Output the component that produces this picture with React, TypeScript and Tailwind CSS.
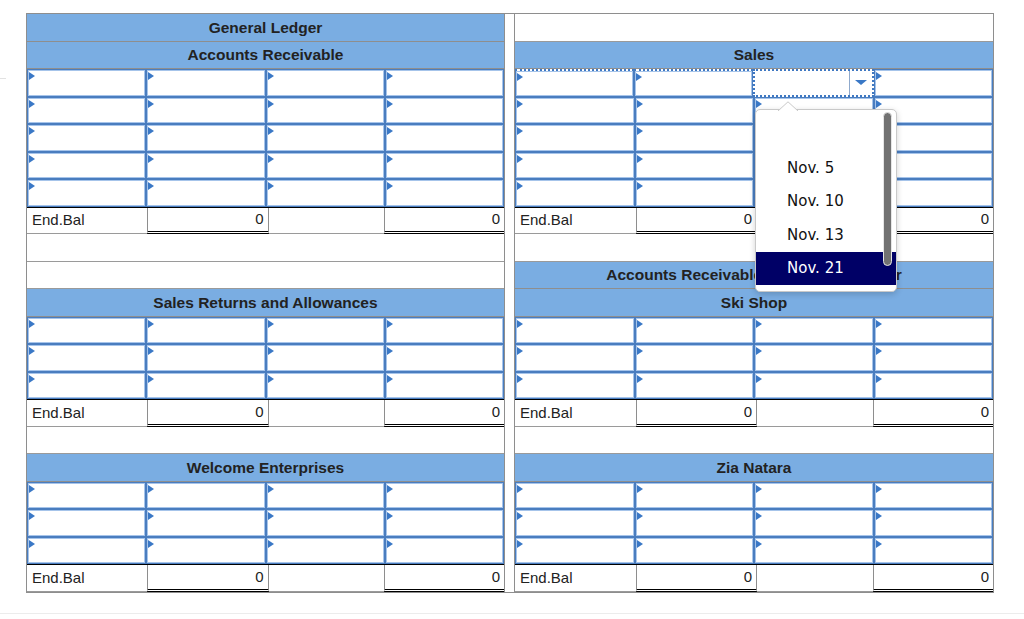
import React from 'react';

type Row =
    | { kind: 'header'; text: string }
    | { kind: 'blank' }
    | { kind: 'input' }
    | { kind: 'select' }
    | { kind: 'end' };

const header = (text: string): Row => ({ kind: 'header', text });
const inputs = (n: number): Row[] => Array.from({ length: n }, () => ({ kind: 'input' }) as Row);

const leftRows: Row[] = [
    header('General Ledger'),
    header('Accounts Receivable'),
    ...inputs(5),
    { kind: 'end' },
    { kind: 'blank' },
    { kind: 'blank' },
    header('Sales Returns and Allowances'),
    ...inputs(3),
    { kind: 'end' },
    { kind: 'blank' },
    header('Welcome Enterprises'),
    ...inputs(3),
    { kind: 'end' },
];

const rightRows: Row[] = [
    { kind: 'blank' },
    header('Sales'),
    { kind: 'select' },
    ...inputs(4),
    { kind: 'end' },
    { kind: 'blank' },
    header('Accounts Receivable Subsidiary Ledger'),
    header('Ski Shop'),
    ...inputs(3),
    { kind: 'end' },
    { kind: 'blank' },
    header('Zia Natara'),
    ...inputs(3),
    { kind: 'end' },
];

const Flag = () => (
    <span className="absolute left-[1px] top-[2px] h-0 w-0 border-y-[4px] border-y-transparent border-l-[6px] border-l-[#3a78c6]" />
);

const InputCell = ({ dottedTop = false }: { dottedTop?: boolean }) => (
    <div
        className={
            dottedTop
                ? 'relative h-full flex-1 border border-[#4a7dbf] border-t-2 border-t-[#3f78c2] [border-top-style:dotted] bg-white shadow-[inset_0_0_0_1px_#a6c4ea]'
                : 'relative h-full flex-1 border border-[#4a7dbf] bg-white shadow-[inset_0_0_0_1px_#a6c4ea]'
        }
    >
        <Flag />
    </div>
);

const SelectCell = () => (
    <div className="relative flex h-full flex-1 border-2 border-dotted border-[#3f78c2] bg-white">
        <div className="flex-1" />
        <div className="flex w-[23px] items-center justify-center border-l border-[#8fa9cc]">
            <span className="h-0 w-0 border-x-[6px] border-x-transparent border-t-[5px] border-t-[#3a78c6]" />
        </div>
    </div>
);

const LedgerRow = ({ row }: { row: Row }) => {
    if (row.kind === 'header') {
        return (
            <div className="flex h-[27.5px] items-center justify-center border-b border-[#8e8e8e] bg-[#7aade2] text-[15.5px] font-bold text-[#222]">
                {row.text}
            </div>
        );
    }
    if (row.kind === 'blank') {
        return <div className="h-[27.5px] border-b border-[#9a9a9a] bg-white" />;
    }
    if (row.kind === 'input') {
        return (
            <div className="flex h-[27.5px]">
                <InputCell />
                <InputCell />
                <InputCell />
                <InputCell />
            </div>
        );
    }
    if (row.kind === 'select') {
        return (
            <div className="flex h-[27.5px]">
                <InputCell dottedTop />
                <InputCell dottedTop />
                <SelectCell />
                <InputCell />
            </div>
        );
    }
    return (
        <div className="flex h-[27.5px] border-t border-black text-[15px] text-[#222]">
            <div className="flex flex-1 items-center border-b border-[#9a9a9a] pl-[5px]">End.Bal</div>
            <div className="flex flex-1 items-center justify-end border-x border-b-[3px] border-double border-x-[#8e8e8e] border-b-black pr-[4px]">
                0
            </div>
            <div className="flex-1 border-b border-[#9a9a9a]" />
            <div className="flex flex-1 items-center justify-end border-l border-b-[3px] border-double border-l-[#8e8e8e] border-b-black pr-[4px]">
                0
            </div>
        </div>
    );
};

const Panel = ({ rows, className }: { rows: Row[]; className: string }) => (
    <div className={className}>
        {rows.map((row, i) => (
            <LedgerRow key={i} row={row} />
        ))}
    </div>
);

const options = ['', 'Nov. 5', 'Nov. 10', 'Nov. 13', 'Nov. 21'];

const DateDropdown = () => (
    <div className="absolute left-[755px] top-[109px] h-[183px] w-[142px] rounded-[5px] border border-[#c9c9c9] bg-white pt-[8px] shadow-[0_2px_6px_rgba(0,0,0,0.18)] font-['DejaVu_Sans',sans-serif] text-[15px]">
        <svg className="absolute -top-[9px] left-[22px]" width="20" height="10" viewBox="0 0 20 10">
            <path d="M0 10 L10 0.8 L20 10" fill="white" stroke="#c9c9c9" strokeWidth="1" />
        </svg>
        {options.map((opt) => (
            <div
                key={opt || 'blank'}
                className={
                    opt === 'Nov. 21'
                        ? 'flex h-[33.4px] items-center bg-[#000066] pl-[31px] text-white'
                        : 'flex h-[33.4px] items-center pl-[31px] text-[#111]'
                }
            >
                {opt}
            </div>
        ))}
        <div className="absolute right-[4px] top-[2px] h-[154px] w-[9px] rounded-full border border-[#e5e5e5] bg-[#727272]" />
    </div>
);

export default function App() {
    return (
        <div className="relative h-[619px] w-[1024px] overflow-hidden bg-white font-['Liberation_Sans',Arial,sans-serif]">
            <div className="absolute left-0 top-[78px] h-px w-[6px] bg-[#e2e2e2]" />
            <div className="ml-[26px] mt-[13px] flex w-[968px] border border-[#8e8e8e]">
                <Panel rows={leftRows} className="w-[478px] border-r border-[#8e8e8e]" />
                <div className="w-[9px] bg-white" />
                <Panel rows={rightRows} className="flex-1 border-l border-[#8e8e8e]" />
            </div>
            <div className="mt-[20px] border-t border-[#ececec]" />
            <DateDropdown />
        </div>
    );
}
